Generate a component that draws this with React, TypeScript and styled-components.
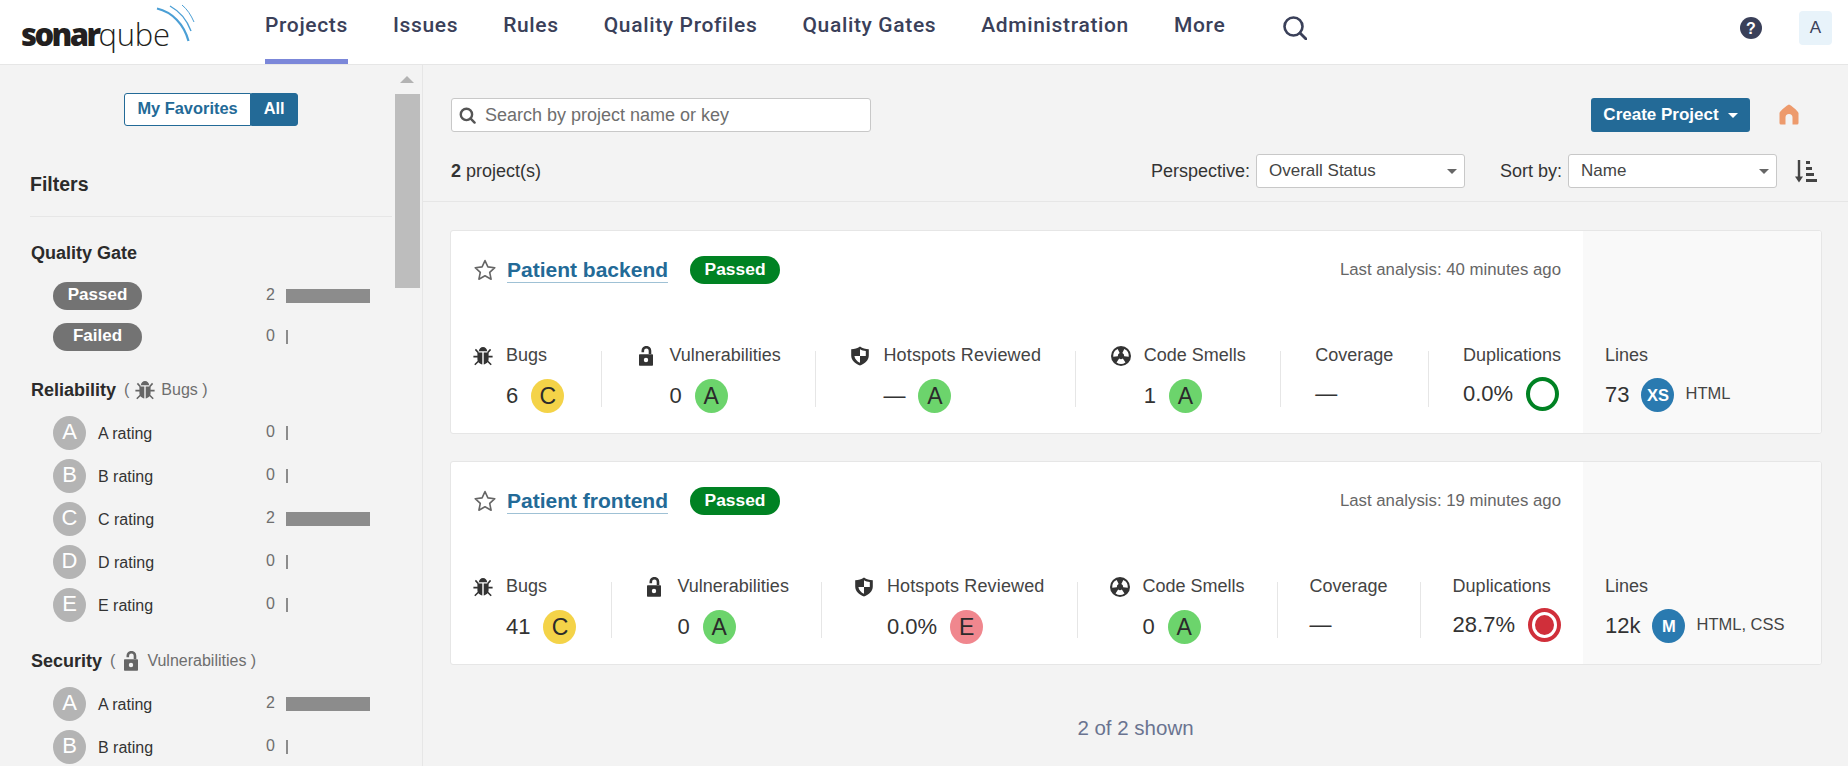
import React from "react";
import styled, { createGlobalStyle } from "styled-components";

const GlobalStyle = createGlobalStyle`
  html, body { margin: 0; padding: 0; height: 100%; overflow: hidden; }
  body { background: #f3f3f3; color: #333; font-family: "Liberation Sans", Arial, sans-serif; font-size: 18px; }
  * { box-sizing: border-box; }
`;

const Page = styled.div`
  width: 1848px;
  height: 766px;
  overflow: hidden;
`;

/* ---------- top bar ---------- */
const TopBar = styled.header`
  height: 65px;
  background: #fff;
  border-bottom: 1px solid #e6e6e6;
  display: flex;
  align-items: stretch;
  padding-left: 21px;
`;

const Logo = styled.div`
  position: relative;
  width: 244px;
  display: flex;
  align-items: flex-start;
  padding-top: 14px;
  font-family: "Open Sans", sans-serif;
  font-size: 31px;
  line-height: 40px;
  color: #231f20;
`;

const LogoBold = styled.span`
  font-weight: 800;
  letter-spacing: -2.6px;
`;

const LogoLight = styled.span`
  font-weight: 300;
  letter-spacing: -0.2px;
`;

const LogoWaves = styled.svg`
  position: absolute;
  left: 109px;
  top: 0;
`;

const Nav = styled.nav`
  display: flex;
  gap: 45px;
  font-family: Roboto, sans-serif;
  font-size: 21px;
  font-weight: 500;
  letter-spacing: 0.65px;
  color: #3a4059;
`;

const NavItem = styled.a<{ $active?: boolean }>`
  display: block;
  height: 64px;
  padding-top: 13px;
  line-height: 24px;
  white-space: nowrap;
  border-bottom: 5px solid ${(p) => (p.$active ? "#7b87d9" : "transparent")};
`;

const NavSearch = styled.svg`
  margin: 16px 0 0 58px;
`;

const TopRight = styled.div`
  margin-left: auto;
  display: flex;
  align-items: flex-start;
  gap: 37px;
  padding: 11px 16px 0 0;
`;

const HelpIcon = styled.svg`
  margin-top: 6px;
`;

const Avatar = styled.div`
  width: 33px;
  height: 34px;
  border-radius: 4px;
  background: #e8f3fa;
  color: #3a4059;
  font-size: 17px;
  text-align: center;
  line-height: 34px;
`;

/* ---------- page split ---------- */
const Split = styled.div`
  display: flex;
  height: 701px;
`;

const Sidebar = styled.aside`
  position: relative;
  width: 423px;
  height: 100%;
  overflow: hidden;
  flex: none;
  border-right: 1px solid #e6e6e6;
  padding: 28px 30px 0;
`;

const ScrollArrow = styled.div`
  position: absolute;
  left: 400px;
  top: 11px;
  width: 0;
  height: 0;
  border-left: 7px solid transparent;
  border-right: 7px solid transparent;
  border-bottom: 7px solid #b3b3b3;
`;

const ScrollThumb = styled.div`
  position: absolute;
  left: 395px;
  top: 29px;
  width: 25px;
  height: 194px;
  background: #bdbdbd;
`;

const ToggleRow = styled.div`
  display: flex;
  justify-content: center;
`;

const ToggleButton = styled.div<{ $on?: boolean }>`
  height: 33px;
  padding: 0 12px;
  font-size: 16.4px;
  font-weight: 700;
  line-height: 29px;
  white-space: nowrap;
  color: ${(p) => (p.$on ? "#fff" : "#236a97")};
  background: ${(p) => (p.$on ? "#236a97" : "#fff")};
  border: 1px solid #236a97;
  border-radius: ${(p) => (p.$on ? "0 3px 3px 0" : "3px 0 0 3px")};
`;

const FiltersTitle = styled.h3`
  margin: 45px 0 0;
  height: 46px;
  font-size: 19.5px;
  font-weight: 700;
  line-height: 26px;
  color: #2b2b2b;
  border-bottom: 1px solid #e6e6e6;
`;

const FacetTitle = styled.div`
  display: flex;
  align-items: center;
  gap: 6px;
  height: 24px;
  margin-left: 1px;
  font-size: 16px;
  color: #6e6e6e;
`;

const FacetName = styled.strong`
  font-size: 18px;
  font-weight: 700;
  color: #2b2b2b;
  margin-right: 2px;
`;

const FacetGroup = styled.section<{ $top: number }>`
  margin-top: ${(p) => p.$top}px;
`;

const FacetRows = styled.div<{ $top: number }>`
  margin-top: ${(p) => p.$top}px;
`;

const FacetRow = styled.div<{ $height: number }>`
  display: flex;
  align-items: center;
  height: ${(p) => p.$height}px;
  padding-left: 23px;
`;

const GatePill = styled.div`
  width: 89px;
  height: 28px;
  border-radius: 14px;
  background: #737373;
  color: #fff;
  font-size: 17px;
  font-weight: 700;
  text-align: center;
  line-height: 26px;
`;

const GreyRating = styled.div`
  width: 33px;
  height: 34px;
  border-radius: 50%;
  background: #b4b4b4;
  color: #fff;
  font-size: 22px;
  text-align: center;
  line-height: 31px;
  flex: none;
`;

const RatingLabel = styled.span`
  margin-left: 12px;
  font-size: 16px;
  color: #333;
  padding-top: 3px;
`;

const Count = styled.span`
  margin-left: auto;
  width: 12px;
  font-size: 16px;
  color: #6e6e6e;
  text-align: right;
  padding-bottom: 2px;
`;

const BarTrack = styled.div`
  width: 84px;
  margin: 0 22px 0 11px;
`;

const Bar = styled.div`
  height: 14px;
  background: #8c8c8c;
`;

/* ---------- main column ---------- */
const Main = styled.main`
  flex: 1;
  min-width: 0;
`;

const PageHeader = styled.div`
  height: 137px;
  padding: 33px 30px 0 28px;
  border-bottom: 1px solid #e6e6e6;
`;

const HeaderTop = styled.div`
  display: flex;
  align-items: flex-start;
  justify-content: space-between;
`;

const SearchBox = styled.div`
  width: 420px;
  height: 34px;
  display: flex;
  align-items: center;
  gap: 9px;
  padding-left: 7px;
  background: #fff;
  border: 1px solid #c8c8c8;
  border-radius: 3px;
  color: #6e6e6e;
  font-size: 18px;
`;

const HeaderActions = styled.div`
  display: flex;
  align-items: flex-start;
  gap: 29px;
  margin-right: 19px;
`;

const CreateButton = styled.div`
  width: 159px;
  height: 34px;
  display: flex;
  align-items: center;
  justify-content: center;
  gap: 9px;
  background: #236a97;
  border-radius: 3px;
  color: #fff;
  font-size: 17px;
  font-weight: 700;
  white-space: nowrap;
`;

const Caret = styled.span<{ $color: string }>`
  width: 0;
  height: 0;
  border-left: 5px solid transparent;
  border-right: 5px solid transparent;
  border-top: 5px solid ${(p) => p.$color};
`;

const HomeIcon = styled.svg`
  margin-top: 6px;
`;

const HeaderBottom = styled.div`
  display: flex;
  align-items: center;
  margin-top: 22px;
  height: 34px;
`;

const ProjectCount = styled.div`
  font-size: 18px;
  margin-right: auto;
`;

const SelectLabel = styled.span`
  font-size: 18px;
  margin: 0 6px 0 35px;
`;

const Select = styled.div`
  width: 209px;
  height: 34px;
  display: flex;
  align-items: center;
  justify-content: space-between;
  padding: 0 7px 0 12px;
  background: #fff;
  border: 1px solid #c8c8c8;
  border-radius: 3px;
  font-size: 17px;
  color: #444;
`;

const SortIcon = styled.svg`
  margin-left: 18px;
`;

const CardList = styled.div`
  padding: 28px 26px 0 27px;
  display: flex;
  flex-direction: column;
  gap: 27px;
`;

const Card = styled.article`
  height: 204px;
  display: flex;
  background: #fff;
  border: 1px solid #e6e6e6;
  border-radius: 3px;
  overflow: hidden;
`;

const CardBody = styled.div`
  flex: 1;
  min-width: 0;
  padding: 0 22px 0 22px;
`;

const CardHead = styled.div`
  display: flex;
  align-items: center;
  height: 66px;
  margin-top: 6px;
`;

const StarIcon = styled.svg`
  flex: none;
`;

const ProjectName = styled.a`
  margin-left: 10px;
  font-size: 21px;
  font-weight: 700;
  line-height: 24px;
  color: #236a97;
  border-bottom: 1px solid #9fc1d5;
  white-space: nowrap;
`;

const PassedBadge = styled.span`
  width: 90px;
  height: 28px;
  margin-left: 22px;
  border-radius: 14px;
  background: #008223;
  color: #fff;
  font-size: 17.4px;
  font-weight: 700;
  text-align: center;
  line-height: 27px;
`;

const LastAnalysis = styled.span`
  margin-left: auto;
  font-size: 16.8px;
  color: #666;
`;

const Measures = styled.div`
  display: flex;
  justify-content: flex-end;
  margin-top: 48px;
`;

const Measure = styled.div<{ $first?: boolean; $last?: boolean; $pad: number }>`
  height: 56px;
  padding: 0 ${(p) => (p.$last ? 0 : p.$pad)}px 0 ${(p) => (p.$first ? 0 : p.$pad)}px;
  border-left: ${(p) => (p.$first ? "none" : "1px solid #e6e6e6")};
  ${(p) => (p.$first ? "margin-right: auto;" : "")}
`;

const MeasureGrid = styled.div`
  display: grid;
  grid-auto-columns: auto;
  column-gap: 13px;
  justify-content: start;
`;

const MeasureIcon = styled.div`
  grid-row: 1;
  grid-column: 1;
  width: 20px;
  height: 20px;
  margin-top: -5px;
`;

const MeasureLabel = styled.div<{ $col?: number; $wide?: boolean }>`
  grid-row: 1;
  grid-column: ${(p) => p.$col ?? 2};
  font-size: 18px;
  line-height: 18px;
  margin-top: -5px;
  color: #444;
  white-space: nowrap;
  letter-spacing: ${(p) => (p.$wide ? "0.15px" : "0")};
`;

const MeasureValue = styled.div<{ $col?: number }>`
  grid-row: 2;
  grid-column: ${(p) => p.$col ?? 2};
  display: flex;
  align-items: center;
  height: 34px;
  margin-top: 13px;
`;

const Num = styled.span`
  font-size: 22px;
  color: #333;
`;

const RatingBall = styled.span<{ $bg: string }>`
  display: inline-block;
  width: 33px;
  height: 34px;
  margin-left: 13px;
  border-radius: 50%;
  background: ${(p) => p.$bg};
  color: #2b2b2b;
  font-size: 23px;
  text-align: center;
  line-height: 34px;
`;

const DupRing = styled.span<{ $failed?: boolean }>`
  position: relative;
  display: inline-block;
  width: 33px;
  height: 34px;
  margin-left: 13px;
  border-radius: 50%;
  background: #fff;
  border: 4px solid ${(p) => (p.$failed ? "#d02f3a" : "#008223")};
`;

const DupDot = styled.span`
  position: absolute;
  inset: 3px;
  border-radius: 50%;
  background: #d02f3a;
`;

const CardSide = styled.div`
  width: 238px;
  flex: none;
  background: #f9f9f9;
  padding: 112px 0 0 22px;
`;

const SideLabel = styled.div`
  font-size: 18px;
  line-height: 18px;
  margin-top: 3px;
  color: #444;
`;

const SideValue = styled.div`
  display: flex;
  align-items: center;
  height: 34px;
  margin-top: 14px;
`;

const SizeBall = styled.span`
  width: 33px;
  height: 34px;
  margin-left: 12px;
  border-radius: 50%;
  background: #2a7ab0;
  color: #fff;
  font-size: 16.5px;
  font-weight: 700;
  text-align: center;
  line-height: 34px;
`;

const Languages = styled.span`
  margin-left: 11px;
  font-size: 16.5px;
  color: #444;
  padding-bottom: 3px;
  white-space: nowrap;
`;

const ShownCount = styled.div`
  margin-top: 50px;
  text-align: center;
  font-size: 20.5px;
  line-height: 26px;
  color: #6a7390;
`;

/* ---------- icons ---------- */
const BugGlyph = ({ size = 20, color = "#333" }: { size?: number; color?: string }) => (
  <svg width={size} height={size} viewBox="0 0 20 20" fill="none">
    <path d="M5.800 5.200C6 2.800 7.800 1 10 1s4 1.800 4.200 4.200H5.800Z" fill={color} />
    <path d="M4.400 6.400h4.900v12C6.800 18.200 4.400 16 4.400 12.800V6.400ZM10.700 6.400h4.900v6.400c0 3.200-2.400 5.400-4.900 5.600v-12Z" fill={color} />
    <path d="M2.400 3.400l3 3.400M17.600 3.400l-3 3.400M.4 10.600h4.500M19.600 10.600h-4.500M1.800 18.800l3.800-3.800M18.200 18.800l-3.800-3.800" stroke={color} strokeWidth="1.600" />
  </svg>
);

const LockGlyph = ({ size = 20, color = "#333" }: { size?: number; color?: string }) => (
  <svg width={size} height={size} viewBox="0 0 20 20" fill="none">
    <path d="M14 8V4.800a3.600 3.600 0 0 0-7.200 0v1.400" stroke={color} strokeWidth="2.600" />
    <path fillRule="evenodd" clipRule="evenodd" d="M4 8.200h12c.6 0 1 .4 1 1v9.600c0 .6-.4 1-1 1H4c-.6 0-1-.4-1-1V9.200c0-.6.4-1 1-1Zm6 3.600a2.200 2.200 0 1 0 0 4.400 2.200 2.200 0 0 0 0-4.400Z" fill={color} />
  </svg>
);

const ShieldGlyph = () => (
  <svg width="20" height="20" viewBox="0 0 20 20" fill="none">
    <path d="M10 .4c2.600 1.700 5.400 2.600 8.800 2.800v6.400c0 4.600-3.800 8.200-8.800 10-5-1.800-8.800-5.400-8.800-10V3.200C4.600 3 7.400 2.100 10 .4Z" fill="#333" />
    <path d="M10 3.200c1.800 1 3.600 1.600 5.800 1.900V10H10V3.200ZM10 10v6.800C7.200 15.500 4.800 13.200 4.400 10H10Z" fill="#fff" />
  </svg>
);

const sector = (from: number, to: number, inner: number, outer: number) => {
  const pt = (r: number, a: number) => {
    const rad = (a * Math.PI) / 180;
    return `${(10 + r * Math.cos(rad)).toFixed(2)} ${(10 + r * Math.sin(rad)).toFixed(2)}`;
  };
  return `M${pt(inner, from)}L${pt(outer, from)}A${outer} ${outer} 0 0 1 ${pt(outer, to)}L${pt(inner, to)}A${inner} ${inner} 0 0 0 ${pt(inner, from)}Z`;
};

const SmellGlyph = () => (
  <svg width="20" height="20" viewBox="0 0 20 20" fill="none">
    <circle cx="10" cy="10" r="10" fill="#333" />
    <path d={sector(175, 245, 3.200, 7.800)} fill="#fff" />
    <path d={sector(295, 365, 3.200, 7.800)} fill="#fff" />
    <path d={sector(55, 125, 3.200, 7.800)} fill="#fff" />
  </svg>
);

const SearchGlyph = ({ size, color, width }: { size: number; color: string; width: number }) => (
  <svg width={size} height={size} viewBox="0 0 24 24" fill="none">
    <circle cx="10.500" cy="10.500" r="8" stroke={color} strokeWidth={width} />
    <path d="M16.500 16.500L22 22" stroke={color} strokeWidth={width} strokeLinecap="round" />
  </svg>
);

const StarGlyph = () => (
  <StarIcon width="24" height="24" viewBox="0 0 24 24" fill="none">
    <path d="M12 2.600l2.900 6.300 6.900.800-5.100 4.700 1.400 6.800-6.100-3.400-6.100 3.400 1.400-6.800-5.100-4.700 6.900-.800L12 2.600Z" stroke="#666" strokeWidth="1.600" strokeLinejoin="round" />
  </StarIcon>
);

/* ---------- data ---------- */
type MeasureData = {
  label: string;
  icon?: "bug" | "lock" | "shield" | "smell";
  value: string;
  rating?: string;
  dup?: "ok" | "failed";
};

type Project = {
  name: string;
  analysis: string;
  pad: number;
  measures: MeasureData[];
  lines: string;
  size: string;
  languages: string;
};

const ratingColors: Record<string, string> = {
  A: "#6cd46c",
  C: "#f4d348",
  E: "#f0878e",
};

const projects: Project[] = [
  {
    name: "Patient backend",
    analysis: "Last analysis: 40 minutes ago",
    pad: 34.3,
    measures: [
      { label: "Bugs", icon: "bug", value: "6", rating: "C" },
      { label: "Vulnerabilities", icon: "lock", value: "0", rating: "A" },
      { label: "Hotspots Reviewed", icon: "shield", value: "—", rating: "A" },
      { label: "Code Smells", icon: "smell", value: "1", rating: "A" },
      { label: "Coverage", value: "—" },
      { label: "Duplications", value: "0.0%", dup: "ok" },
    ],
    lines: "73",
    size: "XS",
    languages: "HTML",
  },
  {
    name: "Patient frontend",
    analysis: "Last analysis: 19 minutes ago",
    pad: 32,
    measures: [
      { label: "Bugs", icon: "bug", value: "41", rating: "C" },
      { label: "Vulnerabilities", icon: "lock", value: "0", rating: "A" },
      { label: "Hotspots Reviewed", icon: "shield", value: "0.0%", rating: "E" },
      { label: "Code Smells", icon: "smell", value: "0", rating: "A" },
      { label: "Coverage", value: "—" },
      { label: "Duplications", value: "28.7%", dup: "failed" },
    ],
    lines: "12k",
    size: "M",
    languages: "HTML, CSS",
  },
];

const gateRows = [
  { label: "Passed", count: 2 },
  { label: "Failed", count: 0 },
];

const reliabilityRows = [
  { label: "A", count: 0 },
  { label: "B", count: 0 },
  { label: "C", count: 2 },
  { label: "D", count: 0 },
  { label: "E", count: 0 },
];

const securityRows = [
  { label: "A", count: 2 },
  { label: "B", count: 0 },
];

const navItems = ["Projects", "Issues", "Rules", "Quality Profiles", "Quality Gates", "Administration", "More"];

const measureIcon = (name: MeasureData["icon"]) => {
  if (name === "bug") return <BugGlyph />;
  if (name === "lock") return <LockGlyph />;
  if (name === "shield") return <ShieldGlyph />;
  if (name === "smell") return <SmellGlyph />;
  return null;
};

function CountBar({ count }: { count: number }) {
  return (
    <>
      <Count>{count}</Count>
      <BarTrack>
        <Bar style={{ width: count > 0 ? "100%" : "2px" }} />
      </BarTrack>
    </>
  );
}

function RatingRows({ rows, top }: { rows: { label: string; count: number }[]; top: number }) {
  return (
    <FacetRows $top={top}>
      {rows.map((row) => (
        <FacetRow key={row.label} $height={43}>
          <GreyRating>{row.label}</GreyRating>
          <RatingLabel>{row.label} rating</RatingLabel>
          <CountBar count={row.count} />
        </FacetRow>
      ))}
    </FacetRows>
  );
}

function ProjectCard({ project }: { project: Project }) {
  return (
    <Card>
      <CardBody>
        <CardHead>
          <StarGlyph />
          <ProjectName>{project.name}</ProjectName>
          <PassedBadge>Passed</PassedBadge>
          <LastAnalysis>{project.analysis}</LastAnalysis>
        </CardHead>
        <Measures>
          {project.measures.map((m, i) => (
            <Measure key={m.label} $pad={project.pad} $first={i === 0} $last={i === project.measures.length - 1}>
              <MeasureGrid>
                {m.icon && <MeasureIcon>{measureIcon(m.icon)}</MeasureIcon>}
                <MeasureLabel $col={m.icon ? 2 : 1} $wide={m.label.length > 15}>
                  {m.label}
                </MeasureLabel>
                <MeasureValue $col={m.icon ? 2 : 1}>
                  <Num>{m.value}</Num>
                  {m.rating && <RatingBall $bg={ratingColors[m.rating]}>{m.rating}</RatingBall>}
                  {m.dup && (
                    <DupRing $failed={m.dup === "failed"}>{m.dup === "failed" && <DupDot />}</DupRing>
                  )}
                </MeasureValue>
              </MeasureGrid>
            </Measure>
          ))}
        </Measures>
      </CardBody>
      <CardSide>
        <SideLabel>Lines</SideLabel>
        <SideValue>
          <Num>{project.lines}</Num>
          <SizeBall>{project.size}</SizeBall>
          <Languages>{project.languages}</Languages>
        </SideValue>
      </CardSide>
    </Card>
  );
}

export default function App() {
  return (
    <Page>
      <GlobalStyle />
      <TopBar>
        <Logo>
          <LogoBold>sonar</LogoBold>
          <LogoLight>qube</LogoLight>
          <LogoWaves width="70" height="50" viewBox="0 0 70 50" fill="none">
            <path d="M27 8.500C42 12 54 24 58.500 41" stroke="#4b9fd5" strokeWidth="2.200" />
            <path d="M40 6C49 11 57 20 61 31" stroke="#4b9fd5" strokeWidth="1.400" />
            <path d="M52 5C57 9 61 15 64 22" stroke="#4b9fd5" strokeWidth="1" />
          </LogoWaves>
        </Logo>
        <Nav>
          {navItems.map((item, i) => (
            <NavItem key={item} $active={i === 0}>
              {item}
            </NavItem>
          ))}
        </Nav>
        <NavSearch width="24" height="24" viewBox="0 0 24 24" fill="none">
          <circle cx="10.500" cy="10.500" r="9" stroke="#3a4059" strokeWidth="2.600" />
          <path d="M17 17l6 6" stroke="#3a4059" strokeWidth="2.800" strokeLinecap="round" />
        </NavSearch>
        <TopRight>
          <HelpIcon width="22" height="22" viewBox="0 0 22 22">
            <circle cx="11" cy="11" r="11" fill="#3a4059" />
            <text x="11" y="16.500" textAnchor="middle" fontSize="16" fontWeight="700" fill="#fff" fontFamily="Liberation Sans, sans-serif">
              ?
            </text>
          </HelpIcon>
          <Avatar>A</Avatar>
        </TopRight>
      </TopBar>
      <Split>
        <Sidebar>
          <ScrollArrow />
          <ScrollThumb />
          <ToggleRow>
            <ToggleButton>My Favorites</ToggleButton>
            <ToggleButton $on>All</ToggleButton>
          </ToggleRow>
          <FiltersTitle>Filters</FiltersTitle>
          <FacetGroup $top={24}>
            <FacetTitle>
              <FacetName>Quality Gate</FacetName>
            </FacetTitle>
            <FacetRows $top={10}>
              {gateRows.map((row) => (
                <FacetRow key={row.label} $height={41}>
                  <GatePill>{row.label}</GatePill>
                  <CountBar count={row.count} />
                </FacetRow>
              ))}
            </FacetRows>
          </FacetGroup>
          <FacetGroup $top={21}>
            <FacetTitle>
              <FacetName>Reliability</FacetName>( <BugGlyph size={20} color="#666" /> Bugs )
            </FacetTitle>
            <RatingRows rows={reliabilityRows} top={9} />
          </FacetGroup>
          <FacetGroup $top={23}>
            <FacetTitle>
              <FacetName>Security</FacetName>( <LockGlyph size={20} color="#666" /> Vulnerabilities )
            </FacetTitle>
            <RatingRows rows={securityRows} top={9} />
          </FacetGroup>
        </Sidebar>
        <Main>
          <PageHeader>
            <HeaderTop>
              <SearchBox>
                <SearchGlyph size={17} color="#555" width={3.400} />
                Search by project name or key
              </SearchBox>
              <HeaderActions>
                <CreateButton>
                  Create Project
                  <Caret $color="#fff" />
                </CreateButton>
                <HomeIcon width="20" height="21" viewBox="0 0 20 21">
                  <path d="M10 .5C12 1 19 7 19.500 9v10a1.500 1.500 0 0 1-1.500 1.500h-4.500v-7a3.500 3.500 0 0 0-7 0v7H2A1.500 1.500 0 0 1 .5 19V9C1 7 8 1 10 .5Z" fill="#ed9a6c" />
                </HomeIcon>
              </HeaderActions>
            </HeaderTop>
            <HeaderBottom>
              <ProjectCount>
                <b>2</b> project(s)
              </ProjectCount>
              <SelectLabel>Perspective:</SelectLabel>
              <Select>
                Overall Status
                <Caret $color="#666" />
              </Select>
              <SelectLabel>Sort by:</SelectLabel>
              <Select>
                Name
                <Caret $color="#666" />
              </Select>
              <SortIcon width="23" height="24" viewBox="0 0 23 24" fill="none">
                <path d="M4 1v20" stroke="#444" strokeWidth="2.400" />
                <path d="M0 17.500h8L4 23.500 0 17.500Z" fill="#444" />
                <path d="M11 2h4v3h-4zM11 8h6v3h-6zM11 14h8v3h-8zM11 20h11v3H11z" fill="#444" />
              </SortIcon>
            </HeaderBottom>
          </PageHeader>
          <CardList>
            {projects.map((p) => (
              <ProjectCard key={p.name} project={p} />
            ))}
          </CardList>
          <ShownCount>2 of 2 shown</ShownCount>
        </Main>
      </Split>
    </Page>
  );
}
